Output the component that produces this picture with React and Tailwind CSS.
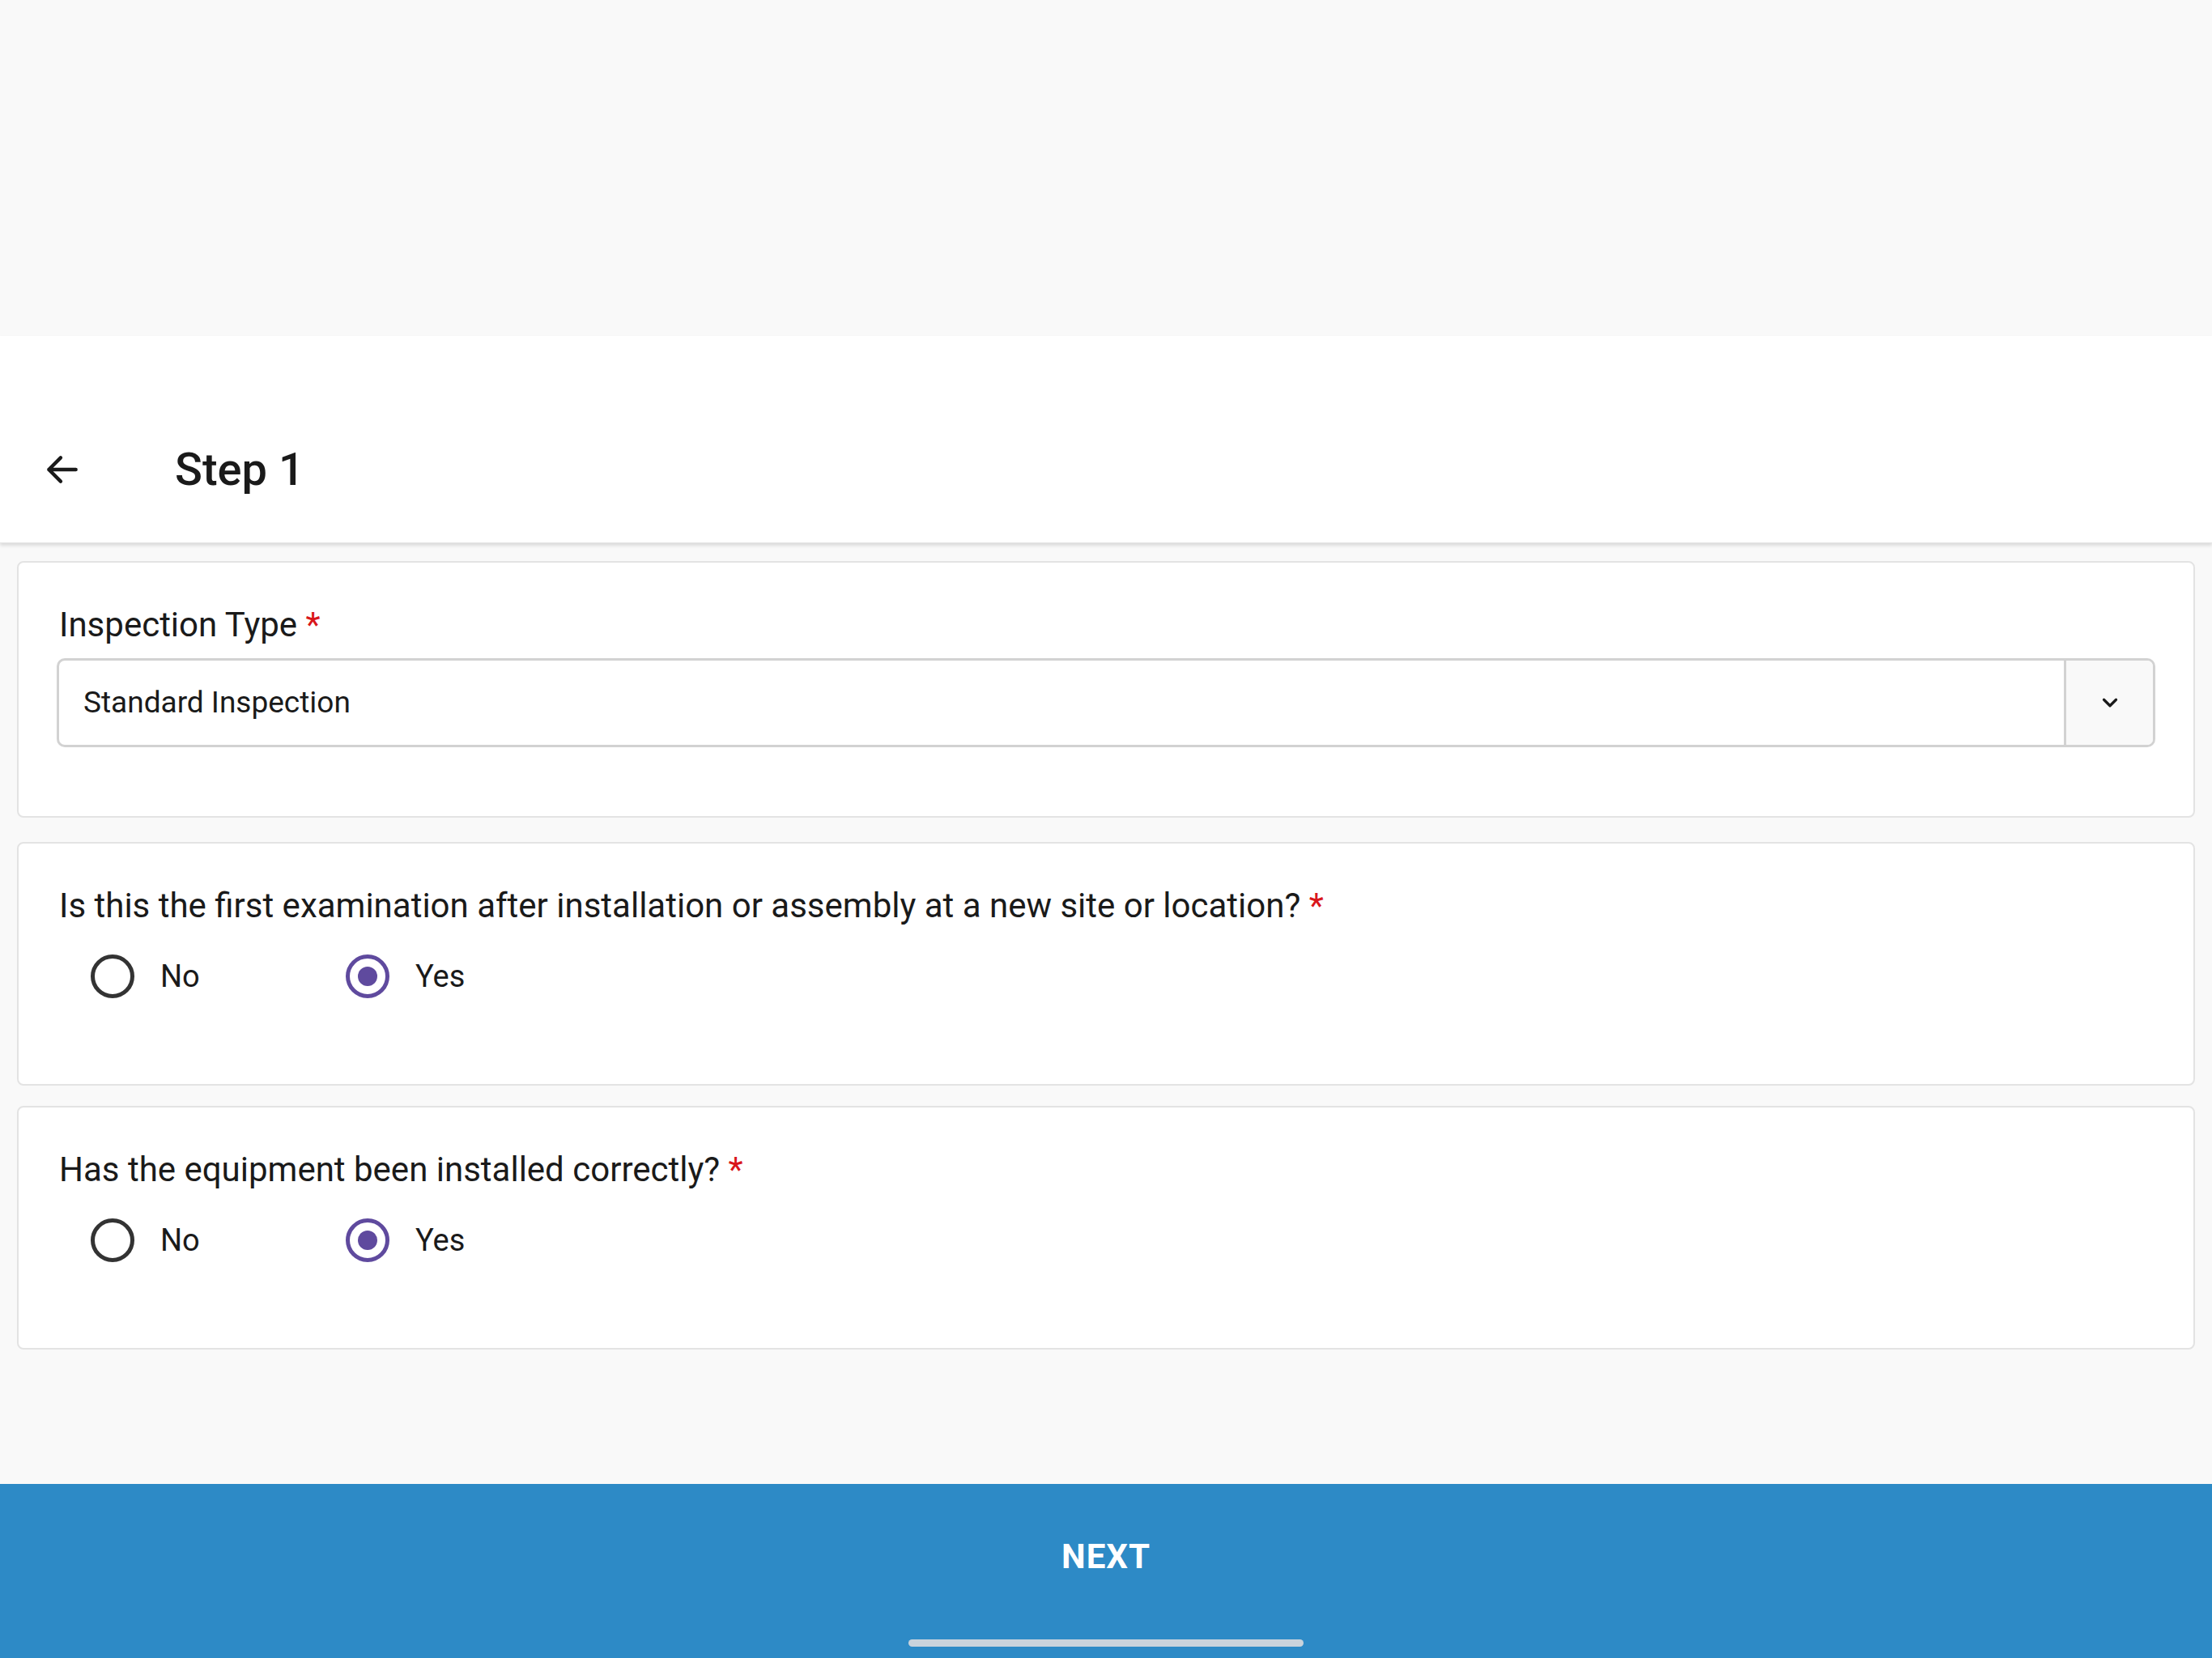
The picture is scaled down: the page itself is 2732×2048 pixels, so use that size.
export default function App() {
  const Radio = ({ label, checked }) => (
    <div className="flex items-center w-[315px]">
      <div className={`w-[54px] h-[54px] rounded-full border-[5px] flex items-center justify-center ${checked ? "border-[#5f4a9e]" : "border-[#333]"}`}>
        {checked && <div className="w-[24px] h-[24px] rounded-full bg-[#5f4a9e]" />}
      </div>
      <span className="ml-[32px] text-[38px] text-[#1a1a1a]">{label}</span>
    </div>
  );
  const Question = ({ text }) => (
    <div className="mx-[21px] bg-white border-2 border-[#e3e3e3] rounded-[8px] h-[301px] px-[47px] pt-[48px]">
      <div className="text-[42px] leading-[58px] text-[#1a1a1a] ml-[3px]">
        {text} <span className="text-[#d9161b]">*</span>
      </div>
      <div className="flex mt-[28px] ml-[42px] h-[60px] items-center">
        <Radio label="No" />
        <Radio label="Yes" checked />
      </div>
    </div>
  );
  return (
    <div className="w-[2732px] h-[2048px] bg-[#f9f9f9] flex flex-col overflow-hidden" style={{ fontFamily: "Roboto, 'Noto Sans', sans-serif" }}>
      <div className="h-[415px] shrink-0" />
      <div className="h-[256px] shrink-0 bg-white flex items-center pt-[75px] shadow-[0_3px_4px_rgba(0,0,0,0.12)] border-b border-[#e4e4e4] relative z-10">
        <svg className="ml-[52px]" width="50" height="50" viewBox="0 0 24 24" fill="none" stroke="#1a1a1a" strokeWidth="2.1" strokeLinecap="round" strokeLinejoin="round">
          <path d="M20 12H4M11 5l-7 7 7 7" />
        </svg>
        <span className="ml-[114px] text-[56px] font-medium text-[#1a1a1a]">Step 1</span>
      </div>
      <div className="flex flex-col flex-1 pt-[22px]">
        <div className="mx-[21px] bg-white border-2 border-[#e3e3e3] rounded-[8px] h-[317px] px-[47px] pt-[48px]">
          <div className="text-[42px] leading-[58px] text-[#1a1a1a] ml-[3px]">
            Inspection Type <span className="text-[#d9161b]">*</span>
          </div>
          <div className="mt-[12px] h-[110px] border-[3px] border-[#d2d2d2] rounded-[10px] flex overflow-hidden">
            <div className="flex-1 flex items-center pl-[30px] text-[37px] text-[#1a1a1a]">Standard Inspection</div>
            <div className="w-[110px] border-l-[3px] border-[#d2d2d2] bg-[#f9f9f9] flex items-center justify-center">
              <svg width="30" height="30" viewBox="0 0 24 24" fill="none" stroke="#1a1a1a" strokeWidth="2.6" strokeLinecap="round" strokeLinejoin="round">
                <path d="M6 9l6 6 6-6" />
              </svg>
            </div>
          </div>
        </div>
        <div className="h-[30px]" />
        <Question text="Is this the first examination after installation or assembly at a new site or location?" />
        <div className="h-[25px]" />
        <Question text="Has the equipment been installed correctly?" />
      </div>
      <div className="h-[215px] shrink-0 bg-[#2d8ac6] flex flex-col items-center">
        <div className="mt-[64px] text-[42px] leading-[52px] font-bold text-white tracking-[1px]">NEXT</div>
        <div className="mt-auto mb-[14px] w-[488px] h-[9px] rounded-full bg-[#c9d3dc]" />
      </div>
    </div>
  );
}
